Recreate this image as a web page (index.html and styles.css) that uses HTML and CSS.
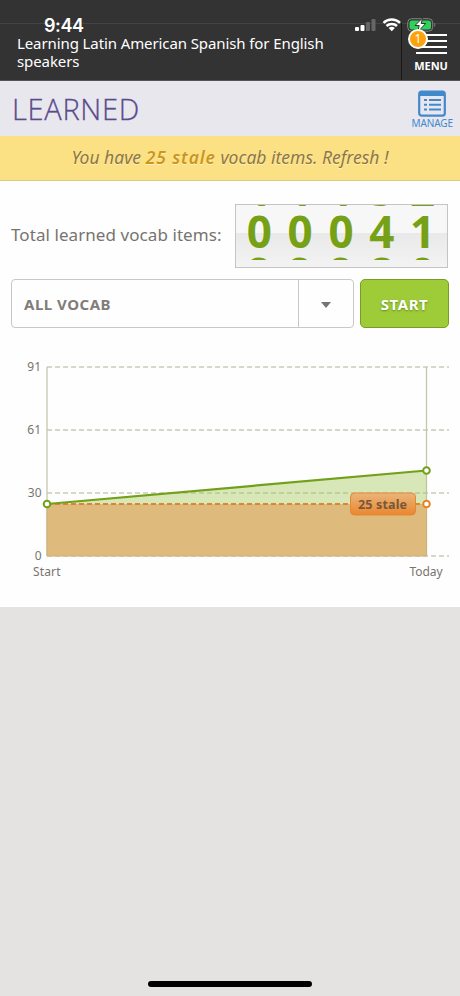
FILE: index.html
```html
<!DOCTYPE html>
<html lang="en">
<head>
    <meta charset="UTF-8">
    <meta name="viewport" content="width=device-width, initial-scale=1.0">
    <title>Learned vocab</title>
    <link rel="stylesheet" href="styles.css">
</head>
<body>

    <header>
        <div class="status-bar">
            <span class="time">9:44</span>
            <svg class="status-icons" width="84" height="20" viewBox="0 0 84 20">
                <g fill="#fff">
                    <rect x="2" y="12" width="4" height="4" rx="1"/>
                    <rect x="7.5" y="10" width="4" height="6" rx="1"/>
                    <rect x="13" y="7" width="4" height="9" rx="1" fill="#666"/>
                    <rect x="18.5" y="4" width="4" height="12" rx="1" fill="#666"/>
                </g>
                <g fill="none" stroke="#fff" stroke-width="2.5">
                    <path d="M30.500 7.800a12 12 0 0 1 16.500 0"/>
                    <path d="M33.500 11a7.600 7.600 0 0 1 10.500 0"/>
                </g>
                <path d="M35.700 13.100a4.300 4.300 0 0 1 6.100 0l-3.050 3.200z" fill="#fff"/>
                <rect x="54.700" y="3.700" width="25" height="12.500" rx="4" fill="none" stroke="#858585"/>
                <rect x="56.500" y="5.500" width="21.500" height="9" rx="2.500" fill="#2fd158"/>
                <path d="M81.300 7.700q2 2 0 4.500z" fill="#858585"/>
                <path d="M69.500 3l-7.500 7.500h4.200l-1.500 6.500 8-8.500h-4.500z" fill="#fff" stroke="#333" stroke-width="1"/>
            </svg>
        </div>
        <div class="course">Learning Latin American Spanish for English<br>speakers</div>
        <div class="menu">
            <span class="bars"></span>
            <span class="menu-label">MENU</span>
            <span class="badge">1</span>
        </div>
    </header>

    <div class="title-bar">
        <h1>LEARNED</h1>
        <div class="manage">
            <svg width="28" height="28" viewBox="0 0 28 28">
                <rect x="1.200" y="1.700" width="25.600" height="24" rx="2.500" fill="none" stroke="#4289cb" stroke-width="2.200"/>
                <path d="M1 2h26v4H1z" fill="#4289cb"/>
                <path d="M6 10h3M6 14.800h3M6 19.600h3M11 10h12M11 14.800h12M11 19.600h12" stroke="#4289cb" stroke-width="2"/>
            </svg>
            <span>MANAGE</span>
        </div>
    </div>

    <div class="notice"><span>You have <b>25 stale</b> vocab items. Refresh !</span></div>

    <main>
        <div class="total">
            <span class="total-label">Total learned vocab items:</span>
            <div class="counter">
                <div class="reels">
                    <span>1<br>0<br>9</span>
                    <span>1<br>0<br>9</span>
                    <span>1<br>0<br>9</span>
                    <span>3<br>4<br>8</span>
                    <span>2<br>1<br>0</span>
                </div>
            </div>
        </div>

        <div class="controls">
            <div class="select">
                <span class="select-value">ALL VOCAB</span>
                <span class="select-arrow"><i></i></span>
            </div>
            <button>START</button>
        </div>

        <!-- Progress chart -->
        <svg class="chart" width="460" height="244" viewBox="0 356 460 244">
            <g class="grid">
                <path d="M47 367H449M47 430H449M47 493H449M47 556H449"/>
            </g>
            <path class="axis" d="M47 367V556M426.500 367V556"/>
            <path d="M47 504L426.500 470.500V504Z" fill="#9fc54d" fill-opacity=".4"/>
            <rect x="47" y="504" width="379.500" height="52" fill="#debb7c"/>
            <path d="M47 556V504M47 556H426.500V504" fill="none" stroke="#ceb07a"/>
            <path class="stale-line" d="M47 504H426"/>
            <path class="learned-line" d="M47 504L426.500 470.500"/>
            <circle class="dot" cx="47" cy="504" r="3.300"/>
            <circle class="dot" cx="426.500" cy="470.500" r="3.300"/>
            <circle class="dot stale-dot" cx="426.500" cy="504" r="3.300"/>
            <defs>
                <linearGradient id="tag" x1="0" y1="0" x2="0" y2="1">
                    <stop offset="0" stop-color="#e9b57c"/>
                    <stop offset="1" stop-color="#ec862c"/>
                </linearGradient>
            </defs>
            <rect x="350.500" y="493" width="65" height="22" rx="4" fill="url(#tag)" stroke="#e48736"/>
            <text class="tag-text" x="358" y="508.500" textLength="49">25 stale</text>
            <g class="labels">
                <text x="41" y="371" text-anchor="end">91</text>
                <text x="41" y="434" text-anchor="end">61</text>
                <text x="41.500" y="497" text-anchor="end">30</text>
                <text x="41.500" y="560" text-anchor="end">0</text>
                <text x="33" y="576" textLength="27.500">Start</text>
                <text x="409.500" y="576" textLength="33">Today</text>
            </g>
        </svg>
    </main>

    <div class="home-indicator"></div>

</body>
</html>
```
FILE: styles.css
```css
* {
    box-sizing: border-box;
}
body {
    font-family: "Noto Sans", "Open Sans", sans-serif;
    background-color: #e4e3e1;
    margin: 0;
    height: 996px;
    position: relative;
    overflow: hidden;
}
header {
    position: relative;
    height: 81px;
    background-color: #333;
    border-bottom: 1px solid #555;
    color: white;
}
.status-bar {
    display: flex;
    justify-content: space-between;
    height: 34px;
    padding: 15px 23px 0 44px;
    background: linear-gradient(#444, #444) 0 23px / 100% 1px no-repeat;
}
.time {
    font: 600 18px/22px Inter, sans-serif;
    letter-spacing: -0.4px;
}
.status-icons {
    flex: none;
}
.course {
    padding-left: 17px;
    font-size: 15px;
    line-height: 18px;
    letter-spacing: -0.1px;
    white-space: nowrap;
}
.menu {
    position: absolute;
    top: 23px;
    right: 0;
    width: 59px;
    height: 57px;
    border-left: 1px solid #181818;
    display: flex;
    flex-direction: column;
    align-items: center;
}
.bars {
    width: 31px;
    height: 20px;
    margin-top: 11px;
    background: repeating-linear-gradient(#fff 0 2px, transparent 2px 6px);
}
.menu-label {
    font-size: 11px;
    font-weight: bold;
    line-height: 14px;
    margin-top: 5px;
    letter-spacing: -0.1px;
}
.badge {
    position: absolute;
    left: 6px;
    top: 6px;
    width: 20px;
    height: 20px;
    border: 2px solid white;
    border-radius: 50%;
    background-color: #fda20c;
    font-size: 12px;
    line-height: 16px;
    text-align: center;
}
.title-bar {
    height: 55px;
    padding: 0 7px 0 12px;
    display: flex;
    justify-content: space-between;
    background-color: #e8e7ee;
}
h1 {
    margin: 0;
    color: #5a4b8c;
    font-family: "Open Sans", "Noto Sans", sans-serif;
    font-size: 29px;
    font-weight: 300;
    line-height: 55px;
    letter-spacing: 0.7px;
    -webkit-text-stroke: 0.3px #5a4b8c;
}
.manage {
    display: flex;
    flex-direction: column;
    align-items: center;
    padding-top: 9px;
    color: #4289cb;
    font-size: 10px;
    line-height: 11px;
    letter-spacing: -0.1px;
}
.notice {
    height: 45px;
    background-color: #fce184;
    border-bottom: 1px solid #dccb83;
    color: #8d7744;
    font-size: 17.5px;
    font-style: italic;
    line-height: 43px;
    text-align: center;
    text-shadow: 0 1px 0 #fff0bd;
    white-space: nowrap;
}
.notice b {
    color: #cb961c;
    font-weight: 600;
    letter-spacing: 0.9px;
}
main {
    height: 426px;
    padding-top: 23px;
    background-color: #fefefe;
}
.total {
    display: flex;
    justify-content: space-between;
    padding: 0 12px 0 11px;
}
.total-label {
    color: #77746f;
    font-size: 17px;
    line-height: 62px;
    letter-spacing: 0.07px;
    white-space: nowrap;
}
.counter {
    width: 213px;
    height: 64px;
    border: 1px solid #c4c4c4;
    background: linear-gradient(#f7f7f7 0 45%, #e9e9e9 45%, #f3f3f3);
}
.reels {
    display: flex;
    height: 55px;
    padding: 0 4px 0 3px;
    overflow: hidden;
    color: #76a116;
    font-size: 44px;
    font-weight: bold;
    line-height: 42px;
    text-align: center;
}
.reels span {
    flex: 1;
    margin-top: -37px;
}
.controls {
    display: flex;
    gap: 6px;
    padding: 11px 11px 0;
}
.select {
    display: flex;
    flex: 1;
    height: 49px;
    border: 1px solid #c8c8c8;
    border-radius: 4px;
}
.select-value {
    flex: 1;
    padding-left: 12px;
    color: #807d78;
    font-size: 15px;
    font-weight: bold;
    line-height: 48px;
    letter-spacing: 0.5px;
}
.select-arrow {
    width: 55px;
    border-left: 1px solid #c8c8c8;
    display: flex;
    align-items: center;
    justify-content: center;
    padding-top: 3px;
}
.select-arrow i {
    border: 5.5px solid transparent;
    border-top: 6px solid #77746f;
    border-bottom: 0;
}
button {
    width: 89px;
    height: 49px;
    padding: 0;
    border: 1px solid #789d25;
    border-radius: 5px;
    background-color: #9ecb38;
    color: white;
    font-family: inherit;
    font-size: 15px;
    font-weight: bold;
    letter-spacing: 0.6px;
    text-shadow: 0 1px 2px #668b1d;
}
.chart {
    display: block;
    margin-top: 28px;
}
.grid {
    stroke: #cbc8b9;
    stroke-width: 1.3;
    stroke-dasharray: 5 3;
}
.axis {
    stroke: #c5c7ad;
    stroke-width: 1.3;
}
.stale-line {
    stroke: #df8433;
    stroke-width: 2;
    stroke-dasharray: 5 3;
}
.learned-line {
    stroke: #72a019;
    stroke-width: 2.2;
}
.dot {
    fill: white;
    stroke: #72a019;
    stroke-width: 2;
}
.stale-dot {
    stroke: #e68424;
}
.tag-text {
    fill: #76583a;
    font-size: 12.5px;
    font-weight: bold;
}
.labels {
    fill: #77746f;
    font-size: 12px;
}
.home-indicator {
    position: absolute;
    left: 148px;
    bottom: 9px;
    width: 164px;
    height: 6px;
    border-radius: 3px;
    background-color: black;
}
```
